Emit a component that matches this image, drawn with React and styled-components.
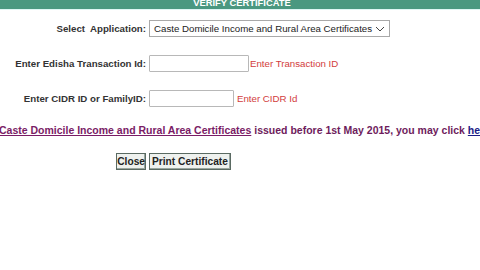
import styled, { createGlobalStyle } from 'styled-components';

const GlobalStyle = createGlobalStyle`
    html, body {
        margin: 0;
        padding: 0;
        background: #ffffff;
        overflow: hidden;
    }
    body {
        font-family: "Liberation Sans", Arial, sans-serif;
        font-size: 9.7px;
        color: #333333;
    }
`

const Header = styled.div`
    height: 9px;
    background: #4a9880;
    border-bottom: 1px solid #def6f4;
    display: flex;
    align-items: flex-end;
    justify-content: center;
    overflow: hidden;
    padding-left: 4px;
`

const HeaderTitle = styled.span`
    color: #ffffff;
    font-weight: bold;
    font-size: 9.4px;
    line-height: 9px;
    margin-bottom: 2px;
    white-space: nowrap;
`

const Form = styled.div`
    display: grid;
    grid-template-columns: 146px auto;
    column-gap: 3px;
    row-gap: 18px;
    margin-top: 10px;
    align-items: center;
`

const Label = styled.label`
    justify-self: end;
    font-weight: bold;
    color: #333333;
    white-space: pre;
`

const Field = styled.div`
    display: flex;
    align-items: center;
    gap: ${({ $gap }) => $gap || 1}px;
`

const SelectBox = styled.div`
    position: relative;
    width: 241px;
    height: 17px;
    box-sizing: border-box;
    border: 1px solid #a9a9a9;
    background: #ffffff;
    display: flex;
    align-items: center;
    padding-left: 4px;
    color: #222222;
    white-space: nowrap;
`

const Chevron = styled.svg`
    position: absolute;
    right: 4px;
    top: 5px;
`

const TextInput = styled.input`
    width: ${({ $w }) => $w}px;
    height: 17px;
    box-sizing: border-box;
    border: 1px solid #b8b8b8;
    border-radius: 1px;
    padding: 0 3px;
    margin: 0;
    font: inherit;
    outline: none;
`

const Hint = styled.span`
    color: #d23c3c;
    white-space: nowrap;
`

const Notice = styled.div`
    margin-top: 17px;
    margin-left: -1px;
    white-space: nowrap;
    font-weight: bold;
    font-size: 10.5px;
    color: #6e1c5c;
`

const NoticeLink = styled.a`
    color: ${({ $blue }) => ($blue ? '#1c1c86' : '#7a1c66')};
    text-decoration: underline;
`

const Buttons = styled.div`
    display: grid;
    grid-template-columns: 146px auto;
    column-gap: 3px;
    margin-top: 17px;
`

const Button = styled.button`
    justify-self: ${({ $end }) => ($end ? 'end' : 'start')};
    font-family: "Liberation Sans", Arial, sans-serif;
    font-size: 10.2px;
    font-weight: bold;
    color: #222222;
    background: #eef1ee;
    border: 1px solid #5a6a62;
    box-shadow: inset -1px -1px 0 #9aa69f;
    padding: 0 ${({ $pad }) => $pad ?? 2}px;
    height: 17px;
    line-height: 15px;
    margin: 0;
`

const App = () => {
    return (
        <>
            <GlobalStyle />
            <Header>
                <HeaderTitle>VERIFY CERTIFICATE</HeaderTitle>
            </Header>
            <Form>
                <Label>{'Select  Application:'}</Label>
                <Field>
                    <SelectBox>
                        Caste Domicile Income and Rural Area Certificates
                        <Chevron width="10" height="6" viewBox="0 0 10 6">
                            <path d="M1 1 L5 5 L9 1" fill="none" stroke="#444" strokeWidth="1" />
                        </Chevron>
                    </SelectBox>
                </Field>

                <Label>Enter Edisha Transaction Id:</Label>
                <Field>
                    <TextInput $w={100} />
                    <Hint>Enter Transaction ID</Hint>
                </Field>

                <Label>Enter CIDR ID or FamilyID:</Label>
                <Field $gap={3}>
                    <TextInput $w={85} />
                    <Hint>Enter CIDR Id</Hint>
                </Field>
            </Form>
            <Notice>
                <NoticeLink>Caste Domicile Income and Rural Area Certificates</NoticeLink>
                {' issued before 1st May 2015, you may click '}
                <NoticeLink $blue>here</NoticeLink>
            </Notice>
            <Buttons>
                <Button $end $pad={0}>Close</Button>
                <Button>Print Certificate</Button>
            </Buttons>
        </>
    );
};

export default App;
